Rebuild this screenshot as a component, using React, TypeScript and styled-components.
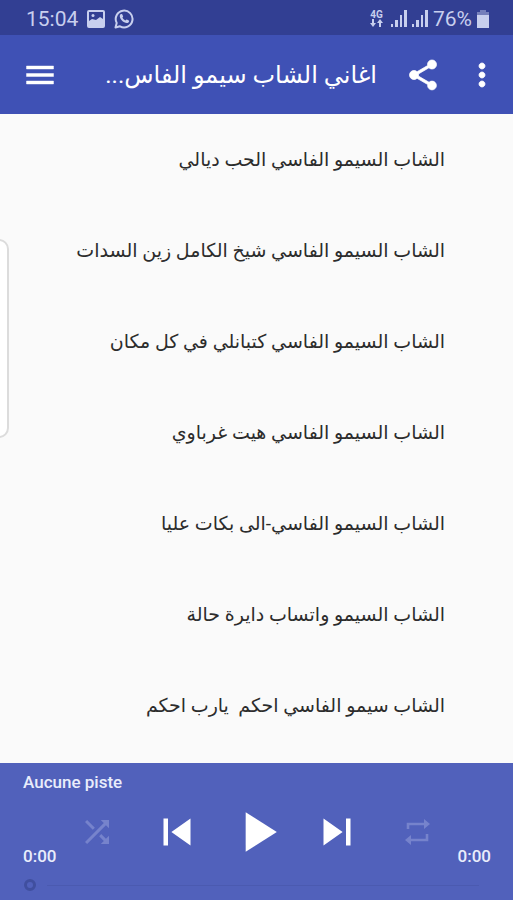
import React, { useState } from "react";
import styled, { createGlobalStyle } from "styled-components";

const GlobalStyle = createGlobalStyle`
  *, *::before, *::after { box-sizing: border-box; }
  html, body, #root { height: 100%; }
  body {
    margin: 0;
    background: #fafafa;
    font-family: Roboto, "DejaVu Sans", sans-serif;
  }
`;

const Screen = styled.div`
  position: relative;
  display: flex;
  flex-direction: column;
  min-height: 100%;
  overflow: hidden;
`;

const StatusBar = styled.div`
  display: flex;
  align-items: center;
  justify-content: space-between;
  height: 35px;
  padding: 2px 24px 0 26px;
  background: #323f93;
  color: #c8cfee;
  font-size: 21px;
  line-height: 24px;
`;

const StatusGroup = styled.div<{ $gap: number }>`
  display: flex;
  align-items: center;
  gap: ${(p) => p.$gap}px;
`;

const Toolbar = styled.header`
  display: flex;
  align-items: center;
  height: 79px;
  padding: 0 13px 0 22px;
  background: #3f51b5;
  color: #fff;
`;

const Title = styled.h1`
  flex: 1;
  margin: 0 28px 0 44px;
  overflow: hidden;
  white-space: nowrap;
  direction: rtl;
  font-family: Roboto, "DejaVu Sans", sans-serif;
  font-size: 24px;
  font-weight: 400;
  line-height: 40px;
`;

const IconButton = styled.button<{ $end?: boolean }>`
  display: flex;
  flex: none;
  margin: 0 0 0 ${(p) => (p.$end ? 23 : 0)}px;
  padding: 0;
  border: 0;
  background: none;
  color: inherit;
`;

const TrackList = styled.ul`
  flex: 1;
  margin: 0;
  padding: 0;
  list-style: none;
`;

const TrackButton = styled.button`
  display: block;
  width: 100%;
  height: 91px;
  padding: 0 68px 0 24px;
  border: 0;
  background: none;
  color: #2c2c2c;
  direction: rtl;
  text-align: right;
  white-space: pre;
  font-family: Roboto, "DejaVu Sans", sans-serif;
  font-size: 19px;
  line-height: 32px;
`;

const EdgeHandle = styled.div`
  position: absolute;
  top: 239px;
  left: -12px;
  width: 21px;
  height: 199px;
  border: 2px solid #dcdcdc;
  border-radius: 10px;
  background: #fff;
`;

const Player = styled.footer`
  display: flex;
  flex-direction: column;
  height: 137px;
  padding: 8px 22px 0 23px;
  background: #5161bb;
  color: #e9edfb;
  font-size: 17px;
  font-weight: 500;
  line-height: 22px;
`;

const Controls = styled.div`
  display: flex;
  align-items: flex-end;
  height: 74px;
`;

const Buttons = styled.div`
  display: grid;
  flex: 1;
  grid-template-columns: repeat(5, 1fr);
  height: 70px;
  align-self: flex-start;
`;

const ControlButton = styled.button<{ $dim?: boolean }>`
  display: flex;
  align-items: center;
  justify-content: center;
  min-width: 0;
  padding: 5px 0 0;
  border: 0;
  background: none;
  color: ${(p) => (p.$dim ? "#7683cc" : "#fff")};
`;

const Seek = styled.input`
  appearance: none;
  width: 100%;
  height: 14px;
  margin: 11px 0 0;
  background: linear-gradient(#4b5ab0, #4b5ab0) 24px 50% / calc(100% - 36px) 1px no-repeat;

  &::-webkit-slider-thumb {
    appearance: none;
    width: 12px;
    height: 12px;
    margin-left: 1px;
    border: 3px solid #404f9f;
    border-radius: 50%;
    background: #5161bb;
  }
`;

const Icon = ({ d, size, weight = 0 }: { d: string; size: number; weight?: number }) => (
  <svg
    width={size}
    height={size}
    viewBox="0 0 24 24"
    fill="currentColor"
    stroke="currentColor"
    strokeWidth={weight}
    aria-hidden="true"
  >
    <path d={d} />
  </svg>
);

const paths = {
  menu: "M3 18h18v-2H3v2zm0-5h18v-2H3v2zm0-7v2h18V6H3z",
  share:
    "M18 16.08c-.76 0-1.44.3-1.96.77L8.91 12.7c.05-.23.09-.46.09-.7s-.04-.47-.09-.7l7.05-4.11c.54.5 1.25.81 2.04.81 1.66 0 3-1.34 3-3s-1.34-3-3-3-3 1.34-3 3c0 .24.04.47.09.7L8.04 9.81C7.5 9.31 6.79 9 6 9c-1.66 0-3 1.34-3 3s1.34 3 3 3c.79 0 1.5-.31 2.04-.81l7.12 4.16c-.05.21-.08.43-.08.65 0 1.61 1.31 2.92 2.92 2.92s2.92-1.31 2.92-2.92-1.31-2.92-2.92-2.92z",
  more: "M12 8c1.1 0 2-.9 2-2s-.9-2-2-2-2 .9-2 2 .9 2 2 2zm0 2c-1.1 0-2 .9-2 2s.9 2 2 2 2-.9 2-2-.9-2-2-2zm0 6c-1.1 0-2 .9-2 2s.9 2 2 2 2-.9 2-2-.9-2-2-2z",
  shuffle:
    "M10.59 9.17L5.41 4 4 5.41l5.17 5.17 1.42-1.41zM14.5 4l2.04 2.04L4 18.59 5.41 20 17.96 7.46 20 9.5V4h-5.5zm.33 9.41l-1.41 1.41 3.13 3.13L14.5 20H20v-5.5l-2.04 2.04-3.13-3.13z",
  prev: "M6 6h2v12H6zm3.5 6l8.5 6V6z",
  play: "M8 5v14l11-7z",
  next: "M6 18l8.5-6L6 6v12zM16 6v12h2V6h-2z",
};

const RepeatIcon = () => (
  <svg width="30" height="30" viewBox="0 0 30 30" aria-hidden="true">
    <path d="M6 12V7h17M25 17v6H8" fill="none" stroke="currentColor" strokeWidth="2.6" />
    <path d="M22 2l6 5-6 5zM9 18l-6 5 6 5z" fill="currentColor" />
  </svg>
);

const PictureIcon = () => (
  <svg width="18" height="18" viewBox="0 0 18 18" aria-hidden="true">
    <rect x="1" y="1" width="16" height="16" rx="1" fill="none" stroke="currentColor" strokeWidth="2" />
    <path d="M2 11l3-2 4 1 4-3 3 2v7H2z" fill="currentColor" />
    <circle cx="6" cy="5.500" r="1.500" fill="currentColor" />
  </svg>
);

const PhoneChatIcon = () => (
  <svg width="20" height="20" viewBox="0 0 20 20" aria-hidden="true">
    <path
      d="M1.5 18.5l1.2-4.6A8.400 8.400 0 1 1 6 17.300z"
      fill="none"
      stroke="currentColor"
      strokeWidth="2"
      strokeLinejoin="round"
    />
    <path
      d="M6 5.800c.6-1 1.800-1.200 2.200-.5l.9 2c.2.600-.7 1.100-.6 1.500.6 1.200 1.400 2 2.700 2.600.5.100 1-1 1.600-.8l2 1c.7.500.2 1.700-.7 2.200-2.900 1.600-9.700-3.800-8.100-8z"
      fill="currentColor"
    />
  </svg>
);

const DataArrows = styled.div`
  display: flex;
  flex-direction: column;
  align-items: center;
  margin-right: 3px;
  font-size: 10px;
  font-weight: 700;
  line-height: 9px;
`;

const ArrowsIcon = () => (
  <svg width="13" height="8" viewBox="0 0 13 8" fill="currentColor" aria-hidden="true">
    <path d="M2 0h2v4h2L3 8 0 4h2zM9 8h2V4h2l-3-4-3 4h2z" />
  </svg>
);

const SignalIcon = () => (
  <svg width="16" height="17" viewBox="0 0 16 17" fill="currentColor" aria-hidden="true">
    <path d="M0 14h2v3H0zM4 10h3v7H4zM9 5h2v12H9zM13 0h3v17h-3z" />
  </svg>
);

const BatteryIcon = () => (
  <svg width="12" height="18" viewBox="0 0 12 18" fill="currentColor" aria-hidden="true">
    <path d="M3 0h6v2h3v4H0V2h3z" opacity=".45" />
    <path d="M0 5h12v13H0z" />
  </svg>
);

const tracks = [
  "الشاب السيمو الفاسي الحب ديالي",
  "الشاب السيمو الفاسي شيخ الكامل زين السدات",
  "الشاب السيمو الفاسي كتبانلي في كل مكان",
  "الشاب السيمو الفاسي هيت غرباوي",
  "الشاب السيمو الفاسي-الى بكات عليا",
  "الشاب السيمو واتساب دايرة حالة",
  "الشاب سيمو الفاسي احكم  يارب احكم",
];

export default function App() {
  const [position, setPosition] = useState(0);
  return (
    <Screen>
      <GlobalStyle />
      <StatusBar>
        <StatusGroup $gap={9}>
          <span>15:04</span>
          <PictureIcon />
          <PhoneChatIcon />
        </StatusGroup>
        <StatusGroup $gap={5}>
          <DataArrows>
            <span>4G</span>
            <ArrowsIcon />
          </DataArrows>
          <SignalIcon />
          <SignalIcon />
          <span>76%</span>
          <BatteryIcon />
        </StatusGroup>
      </StatusBar>
      <Toolbar>
        <IconButton aria-label="Menu">
          <Icon d={paths.menu} size={36} weight={0.3} />
        </IconButton>
        <Title>اغاني الشاب سيمو الفاس...</Title>
        <IconButton aria-label="Partager">
          <Icon d={paths.share} size={36} weight={0.5} />
        </IconButton>
        <IconButton aria-label="Plus" $end>
          <Icon d={paths.more} size={36} weight={0.5} />
        </IconButton>
      </Toolbar>
      <TrackList>
        {tracks.map((track) => (
          <li key={track}>
            <TrackButton>{track}</TrackButton>
          </li>
        ))}
      </TrackList>
      <EdgeHandle />
      <Player>
        <span>Aucune piste</span>
        <Controls>
          <span>0:00</span>
          <Buttons>
            <ControlButton aria-label="Aléatoire" $dim>
              <Icon d={paths.shuffle} size={36} />
            </ControlButton>
            <ControlButton aria-label="Précédent">
              <Icon d={paths.prev} size={54} />
            </ControlButton>
            <ControlButton aria-label="Lecture">
              <Icon d={paths.play} size={68} />
            </ControlButton>
            <ControlButton aria-label="Suivant">
              <Icon d={paths.next} size={54} />
            </ControlButton>
            <ControlButton aria-label="Répéter" $dim>
              <RepeatIcon />
            </ControlButton>
          </Buttons>
          <span>0:00</span>
        </Controls>
        <Seek
          type="range"
          min={0}
          max={100}
          value={position}
          aria-label="Position"
          onChange={(e) => setPosition(Number(e.target.value))}
        />
      </Player>
    </Screen>
  );
}
